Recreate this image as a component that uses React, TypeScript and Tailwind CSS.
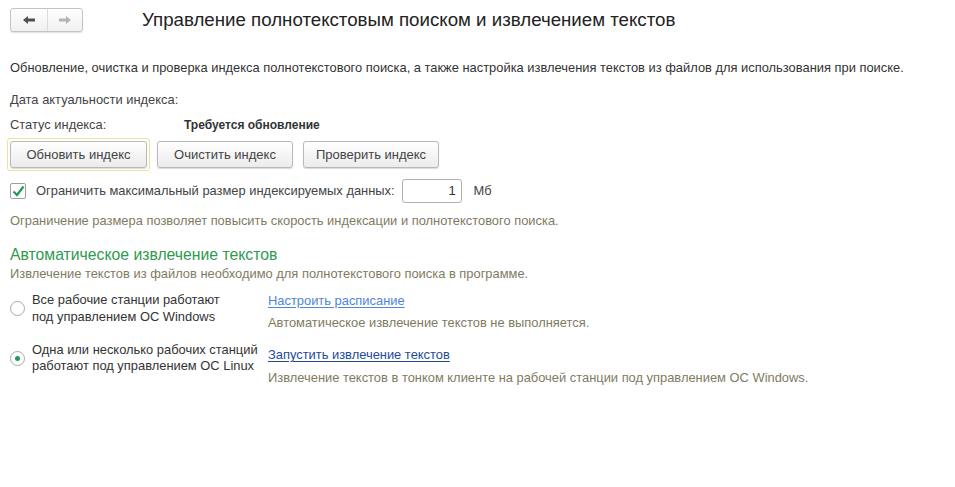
import React from "react";

function Radio({ checked }: { checked?: boolean }) {
  return (
    <div className="w-[15px] h-[15px] rounded-full border border-[#a9a9a9] bg-white flex items-center justify-center shrink-0">
      {checked && <div className="w-[5px] h-[5px] rounded-full bg-[#1f9a5a]" />}
    </div>
  );
}

function Btn({ children, focused, w }: { children: React.ReactNode; focused?: boolean; w: string }) {
  return (
    <div className={focused ? "p-[2px] border border-[#ece39a] rounded-[3px]" : "p-[3px]"}>
      <div className={w + " h-[27px] flex items-center justify-center whitespace-nowrap rounded-[3px] border border-[#b8b8b8] bg-gradient-to-b from-white to-[#ececec] shadow-[0_1px_1px_rgba(0,0,0,0.15)] text-[13px] text-[#444]"}>
        {children}
      </div>
    </div>
  );
}

export default function App() {
  return (
    <div className="w-[955px] h-[487px] bg-white text-[12.9px] text-[#444] relative" style={{ fontFamily: '"Liberation Sans", Arial, sans-serif' }}>
      {/* header */}
      <div className="flex items-center h-[24px] mt-[8px] pl-[10px]">
        <div className="flex h-[24px] w-[73px] rounded-[3px] border border-[#c4c4c4] bg-gradient-to-b from-white to-[#f0f0f0] shadow-[0_1px_1px_rgba(0,0,0,0.12)]">
          <div className="w-[37px] flex items-center justify-center border-r border-[#dcdcdc]">
            <svg width="14" height="10" viewBox="0 0 14 10">
              <path d="M1 5 L6 1 L6 3.6 L13 3.6 L13 6.4 L6 6.4 L6 9 Z" fill="#505050" />
            </svg>
          </div>
          <div className="flex-1 flex items-center justify-center">
            <svg width="14" height="10" viewBox="0 0 14 10">
              <path d="M13 5 L8 1 L8 3.6 L1 3.6 L1 6.4 L8 6.4 L8 9 Z" fill="#b4b4b4" />
            </svg>
          </div>
        </div>
        <div className="ml-[59px] text-[18.7px] text-[#222] leading-none">Управление полнотекстовым поиском и извлечением текстов</div>
      </div>

      <div className="pl-[10px]">
        <div className="mt-[28px] h-[16px] leading-[16px] text-[#333]">
          Обновление, очистка и проверка индекса полнотекстового поиска, а также настройка извлечения текстов из файлов для использования при поиске.
        </div>
        <div className="mt-[16px] h-[16px] leading-[16px]">Дата актуальности индекса:</div>
        <div className="mt-[9px] h-[16px] leading-[16px] flex">
          <span className="w-[174px]">Статус индекса:</span>
          <span className="font-bold text-[#333] text-[12px]">Требуется обновление</span>
        </div>
      </div>

      <div className="flex pl-[7px] mt-[5px] gap-[4px]">
        <Btn focused w="w-[137px]">Обновить индекс</Btn>
        <Btn w="w-[136px]">Очистить индекс</Btn>
        <Btn w="w-[136px]">Проверить индекс</Btn>
      </div>

      <div className="pl-[10px] mt-[8px] flex items-center h-[24px]">
        <div className="w-[16px] h-[16px] border border-[#a0a0a0] rounded-[2px] bg-white flex items-center justify-center">
          <svg width="13" height="12" viewBox="0 0 13 12">
            <path d="M1.5 6.5 L5 10 L11.5 1.5" stroke="#1f9a5a" strokeWidth="2.2" fill="none" />
          </svg>
        </div>
        <span className="ml-[10px] whitespace-nowrap">Ограничить максимальный размер индексируемых данных:</span>
        <div className="ml-[7px] w-[60px] h-[24px] border border-[#b0b0b0] rounded-[3px] bg-white flex items-center justify-end pr-[5px] text-[#333] text-[13px]">1</div>
        <span className="ml-[12px]">Мб</span>
      </div>

      <div className="pl-[10px]">
        <div className="mt-[10px] h-[16px] leading-[16px] text-[#7f7b5f]">
          Ограничение размера позволяет повысить скорость индексации и полнотекстового поиска.
        </div>
        <div className="mt-[16px] h-[20px] leading-[20px] text-[15.75px] text-[#2f9a4f]">Автоматическое извлечение текстов</div>
        <div className="mt-[1px] h-[16px] leading-[16px] text-[#7f7b5f]">
          Извлечение текстов из файлов необходимо для полнотекстового поиска в программе.
        </div>

        <div className="mt-[9px] flex">
          <div className="w-[258px] flex items-start">
            <div className="mt-[10px]"><Radio /></div>
            <div className="ml-[7px] leading-[17px] text-[#333] whitespace-nowrap">
              Все рабочие станции работают<br />под управлением ОС Windows
            </div>
          </div>
          <div>
            <div className="mt-[1px] leading-[17px] text-[#4f86d6] underline underline-offset-2 decoration-[#4f86d6]">Настроить расписание</div>
            <div className="mt-[5px] leading-[17px] text-[#7f7b5f]">Автоматическое извлечение текстов не выполняется.</div>
          </div>
        </div>

        <div className="mt-[11px] flex">
          <div className="w-[258px] flex items-start">
            <div className="mt-[9px]"><Radio checked /></div>
            <div className="ml-[7px] leading-[16px] text-[#333] whitespace-nowrap">
              Одна или несколько рабочих станций<br />работают под управлением ОС Linux
            </div>
          </div>
          <div>
            <div className="mt-[4px] leading-[17px] text-[#1f4a9c] underline underline-offset-2 decoration-[#1f4a9c]">Запустить извлечение текстов</div>
            <div className="mt-[6px] leading-[17px] text-[#7f7b5f]">Извлечение текстов в тонком клиенте на рабочей станции под управлением ОС Windows.</div>
          </div>
        </div>
      </div>
    </div>
  );
}
